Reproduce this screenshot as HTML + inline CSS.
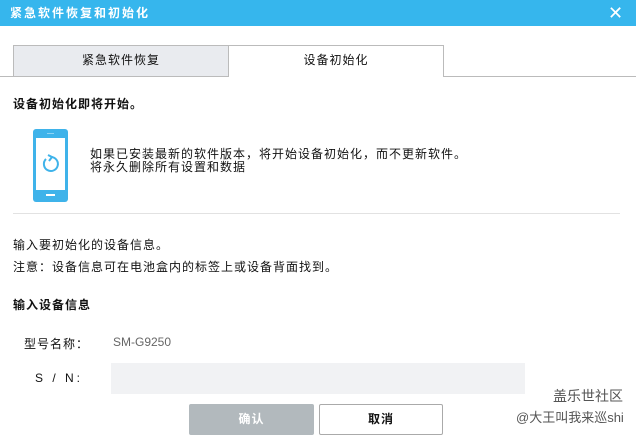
<!DOCTYPE html>
<html><head><meta charset="utf-8"><style>
*{margin:0;padding:0;box-sizing:border-box}
body{width:636px;height:439px;background:#fff;position:relative;overflow:hidden;font-family:"Liberation Sans","Noto Sans CJK SC","WenQuanYi Zen Hei",sans-serif;font-size:12px;color:#111;letter-spacing:1px}
.a{position:absolute;white-space:nowrap}
.title{left:0;top:0;width:636px;height:26px;background:#36b6ed;color:#fff;font-weight:bold;font-size:12px;line-height:26px;padding-left:10px;letter-spacing:2px}
.tab{top:45px;height:31px;border:1px solid #bbb;border-bottom:none;text-align:center;line-height:28px;font-size:12px}
</style></head><body>
<div class="a title">紧急软件恢复和初始化</div>
<div class="a" style="left:608px;top:2px;color:#fff;font-size:18px;line-height:22px">✕</div>
<div class="a" style="left:0;top:76px;width:636px;height:1px;background:#bbb"></div>
<div class="a tab" style="left:13px;width:216px;background:#e9ebef;height:31px">紧急软件恢复</div>
<div class="a tab" style="left:228px;width:216px;background:#fff;height:32px">设备初始化</div>
<div class="a" style="left:13px;top:95px;font-weight:bold">设备初始化即将开始。</div>
<svg class="a" style="left:32px;top:128px" width="40" height="76" viewBox="0 0 40 76">
<rect x="1" y="1" width="35" height="73" rx="3" fill="#3fb3ea"/>
<rect x="4" y="10" width="29" height="52" fill="#fff"/>
<rect x="14" y="66" width="9" height="2" fill="#fff"/>
<rect x="15" y="5" width="7" height="1" fill="#8fd4f5"/>
<path d="M14 31 A7 7 0 1 0 19 29" fill="none" stroke="#3fb3ea" stroke-width="2"/>
<path d="M16 27 L20 29 L17 33" fill="none" stroke="#3fb3ea" stroke-width="2"/>
</svg>
<div class="a" style="left:90px;top:148px;line-height:13px">如果已安装最新的软件版本，将开始设备初始化，而不更新软件。<br>将永久删除所有设置和数据</div>
<div class="a" style="left:13px;top:213px;width:607px;height:1px;background:#e2e2e2"></div>
<div class="a" style="left:13px;top:236px">输入要初始化的设备信息。</div>
<div class="a" style="left:13px;top:258px">注意：设备信息可在电池盒内的标签上或设备背面找到。</div>
<div class="a" style="left:13px;top:296px;font-weight:bold">输入设备信息</div>
<div class="a" style="left:24px;top:335px">型号名称：</div>
<div class="a" style="left:113px;top:335px;color:#666;letter-spacing:0">SM-G9250</div>
<div class="a" style="left:35px;top:371px;letter-spacing:3px">S / N:</div>
<div class="a" style="left:111px;top:363px;width:414px;height:31px;background:#f1f2f4"></div>
<div class="a" style="left:189px;top:404px;width:125px;height:31px;background:#b2b9bd;border-radius:2px;color:#fff;font-weight:bold;text-align:center;line-height:31px">确认</div>
<div class="a" style="left:319px;top:404px;width:124px;height:31px;background:#fff;border:1px solid #aaa;border-radius:2px;font-weight:bold;text-align:center;line-height:29px">取消</div>
<div class="a" style="left:553px;top:386px;font-size:14px;color:#555;letter-spacing:0">盖乐世社区</div>
<div class="a" style="left:516px;top:407px;font-size:13px;color:#555;letter-spacing:0">@大王叫我来巡shi</div>
</body></html>
